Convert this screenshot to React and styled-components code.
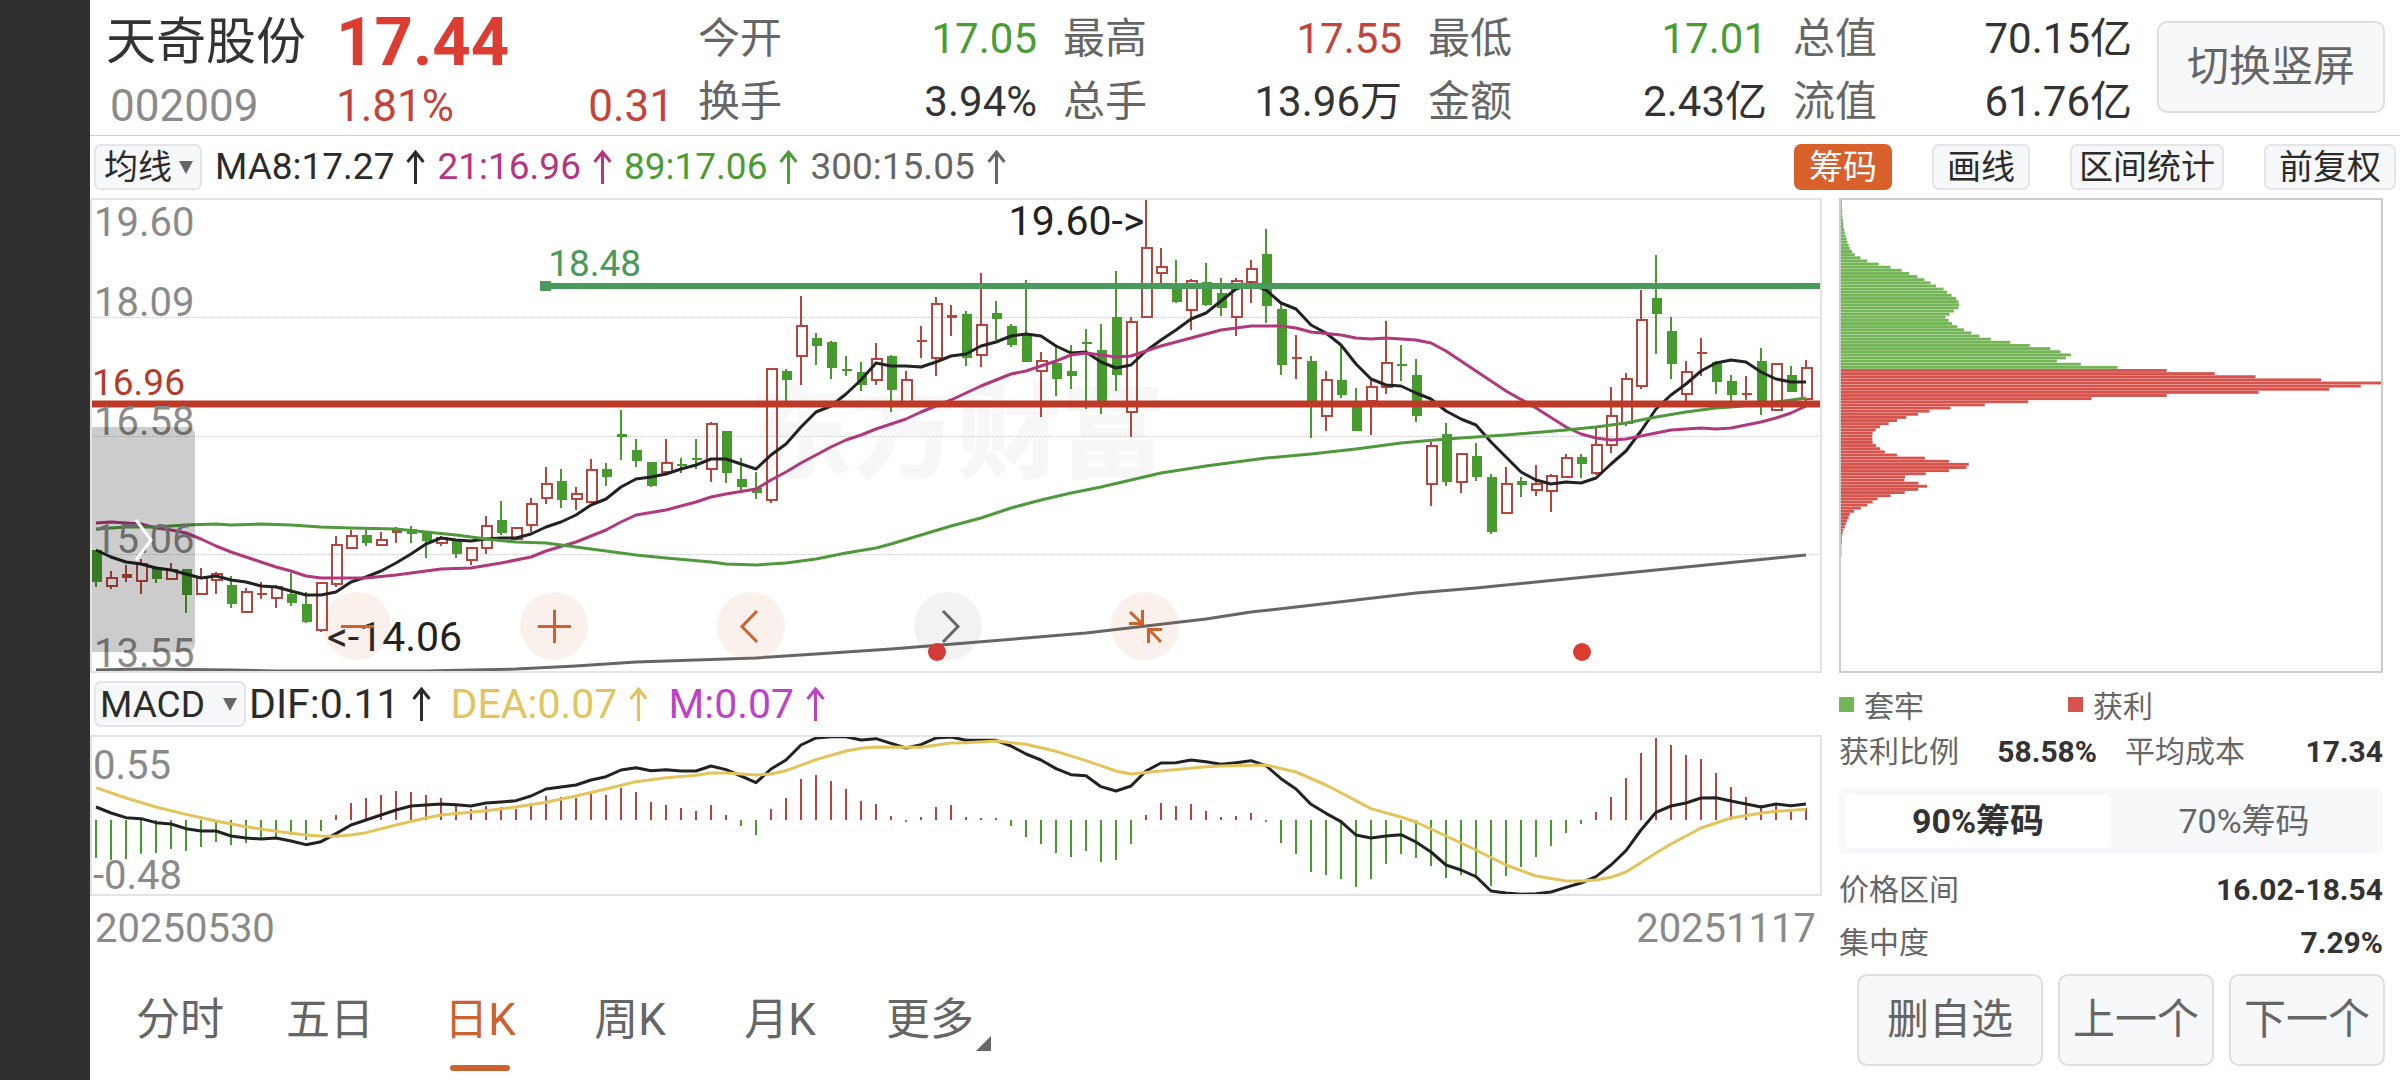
import { useState } from 'react'
import styled, { createGlobalStyle } from 'styled-components'

const RED = '#c4443c'
const GREEN = '#4a9c35'
const ORANGE = '#cc632f'
const INK = '#2b2b2b'
const GREY = '#666'

const GlobalStyle = createGlobalStyle`
  * {
    box-sizing: border-box;
  }
  body {
    margin: 0;
    background: #fff;
    color: ${INK};
    font-family: Roboto, 'Noto Sans CJK SC', sans-serif;
  }
  button,
  select {
    font-family: inherit;
    cursor: pointer;
  }
  svg {
    display: block;
  }
  dl,
  dt,
  dd,
  h1,
  p {
    margin: 0;
    font-weight: 400;
  }
`

const Page = styled.div`
  display: flex;
  min-height: 100vh;
`

const Notch = styled.aside`
  flex: 0 0 90px;
  background: #303030;
`

const Main = styled.main`
  flex: 1;
  min-width: 0;
`

/* header */
const Header = styled.header`
  display: flex;
  height: 136px;
  padding: 0 15px 0 16px;
  border-bottom: 1px solid #d2d2d2;
`

const Identity = styled.div`
  flex: 0 0 568px;
  display: grid;
  grid-template-columns: 230px 1fr auto;
  grid-template-rows: 68px 60px;
  align-items: center;
  padding-top: 8px;
  margin-right: 24px;
  font-size: 44px;
  line-height: 56px;
  color: ${RED};

  h1 {
    font-size: 50px;
    color: #333;
  }
  .price {
    grid-column: span 2;
    font-size: 67px;
    font-weight: 700;
    color: #dc3d33;
  }
  .code {
    padding-left: 4px;
    color: #8a8a8a;
  }
`

const Stats = styled.dl`
  flex: 1;
  display: grid;
  grid-template-columns: repeat(4, 1fr);
  grid-auto-rows: 63px;
  column-gap: 26px;
  padding-top: 7px;
`

const Stat = styled.div`
  display: flex;
  align-items: center;
  justify-content: space-between;
  font-size: 42px;
  line-height: 56px;
  white-space: nowrap;

  dt {
    color: ${GREY};
  }
  dd {
    color: ${({ $color }) => $color || '#333'};
  }
`

const PlainButton = styled.button`
  width: ${({ $width }) => $width}px;
  height: 92px;
  padding: 0;
  border: 2px solid #dcdee1;
  border-radius: 10px;
  background: #f7f8fa;
  color: ${GREY};
  font-size: 42px;
  line-height: 56px;
`

const RotateButton = styled(PlainButton)`
  margin: 21px 0 0 25px;
`

/* toolbars */
const Toolbar = styled.div`
  display: flex;
  align-items: center;
  height: 62px;
  padding: 0 4px;
`

const SelectBox = styled.label`
  position: relative;
  display: block;

  select {
    appearance: none;
    display: block;
    width: ${({ $width }) => $width}px;
    height: 46px;
    padding: 0 0 0 ${({ $inset }) => $inset}px;
    border: 2px solid #e3e5e8;
    border-radius: 7px;
    background: #f7f8fa;
    color: ${INK};
    font-size: ${({ $size }) => $size}px;
  }
  svg {
    position: absolute;
    right: 9px;
    top: 17px;
    pointer-events: none;
  }
`

const Readings = styled.div`
  display: flex;
  flex: 1;
  gap: ${({ $gap }) => $gap}px;
  margin-left: ${({ $lead }) => $lead}px;
  font-size: ${({ $size }) => $size}px;
  line-height: 46px;
`

const Reading = styled.span`
  display: flex;
  align-items: center;
  gap: 12px;
  color: ${({ $color }) => $color};
`

const Tools = styled.div`
  display: flex;
  gap: 40px;
`

const Tool = styled.button`
  height: 46px;
  padding: 0 ${({ $tight }) => ($tight ? 7 : 13)}px;
  border: 2px solid ${({ $on }) => ($on ? '#d8602a' : '#e3e5e8')};
  border-radius: 7px;
  background: ${({ $on }) => ($on ? '#d8602a' : '#f7f8fa')};
  color: ${({ $on }) => ($on ? '#fff' : INK)};
  font-size: 34px;
  line-height: 40px;
`

/* body */
const Body = styled.div`
  display: flex;
  gap: 17px;
  padding-right: 17px;
`

const Charts = styled.section`
  flex: 1;
  min-width: 0;
`

const Plot = styled.div`
  position: relative;
  height: ${({ $height }) => $height}px;
  border: 2px solid #e4e4e4;
  overflow: hidden;

  > svg {
    position: relative;
    width: 100%;
    height: 100%;
  }
`

const Watermark = styled.div`
  position: absolute;
  left: 38%;
  top: 160px;
  font-size: 104px;
  font-weight: 900;
  line-height: 150px;
  color: #f7f7f7;
  white-space: nowrap;
`

const PlotLabel = styled.span`
  position: absolute;
  font-size: ${({ $size }) => $size || 40}px;
  line-height: 34px;
  color: ${({ $color }) => $color || '#8a8a8a'};
  white-space: nowrap;
`

const Drawer = styled.button`
  position: absolute;
  left: 0;
  top: 227px;
  display: flex;
  align-items: center;
  justify-content: center;
  width: 103px;
  height: 225px;
  padding: 0;
  border: 0;
  border-radius: 0 8px 8px 0;
  background: rgba(0, 0, 0, 0.2);
`

const Controls = styled.div`
  position: absolute;
  left: 231px;
  top: 392px;
  display: flex;
  gap: 129px;
`

const Round = styled.button`
  display: flex;
  align-items: center;
  justify-content: center;
  width: 68px;
  height: 68px;
  padding: 0;
  border: 0;
  border-radius: 50%;
  background: ${({ $muted }) => ($muted ? 'rgba(90, 90, 90, 0.08)' : 'rgba(216, 96, 42, 0.09)')};
  color: ${({ $muted }) => ($muted ? '#666' : ORANGE)};
`

const Dates = styled.div`
  display: flex;
  justify-content: space-between;
  align-items: center;
  height: 64px;
  padding: 0 6px 0 5px;
  font-size: 40px;
  color: #8a8a8a;
`

/* chip panel */
const Side = styled.section`
  flex: 0 0 544px;
`

const ChipPlot = styled.div`
  height: 475px;
  border: 2px solid #ccc;

  svg {
    width: 100%;
    height: 100%;
  }
`

const Legend = styled.div`
  display: grid;
  grid-template-columns: 229px 1fr;
  align-items: center;
  height: 62px;
  font-size: 30px;
  color: ${GREY};

  span {
    display: flex;
    align-items: center;
    gap: 10px;
  }
  i {
    width: 15px;
    height: 15px;
  }
`

const Details = styled.div`
  display: flex;
  flex-direction: column;
  gap: 19px;
`

const Facts = styled.dl`
  display: flex;
  gap: 28px;
`

const Fact = styled.div`
  flex: 1;
  display: flex;
  justify-content: space-between;
  font-size: 30px;
  line-height: 34px;

  dt {
    color: ${GREY};
  }
  dd {
    font-weight: 700;
    color: #333;
  }
`

const Segments = styled.div`
  display: flex;
  height: 66px;
  padding: 6px;
  border-radius: 6px;
  background: #f7f8fa;
`

const Segment = styled.button`
  flex: 1;
  padding: 0;
  border: 0;
  border-radius: 6px;
  background: ${({ $on }) => ($on ? '#fff' : 'transparent')};
  color: ${({ $on }) => ($on ? '#333' : GREY)};
  font-size: 34px;
  font-weight: ${({ $on }) => ($on ? 700 : 400)};
  line-height: 50px;
`

/* footer */
const Footer = styled.footer`
  display: flex;
  align-items: center;
  justify-content: space-between;
  height: 120px;
  padding: 0 15px;
`

const Periods = styled.nav`
  display: flex;
`

const Period = styled.button`
  position: relative;
  width: 150px;
  height: 102px;
  padding: 0;
  border: 0;
  background: none;
  color: ${({ $on }) => ($on ? ORANGE : GREY)};
  font-size: 44px;
  line-height: 60px;

  &::after {
    content: '';
    position: absolute;
    left: 45px;
    bottom: 0;
    width: 60px;
    height: 6px;
    border-radius: 3px;
    background: ${({ $on }) => ($on ? ORANGE : 'transparent')};
  }
  svg {
    position: absolute;
    right: 14px;
    bottom: 20px;
  }
`

const Actions = styled.div`
  display: flex;
  gap: 15px;
`

const stats = [
  ['今开', '17.05', GREEN],
  ['最高', '17.55', RED],
  ['最低', '17.01', GREEN],
  ['总值', '70.15亿'],
  ['换手', '3.94%'],
  ['总手', '13.96万'],
  ['金额', '2.43亿'],
  ['流值', '61.76亿'],
]

// kind, high, body top, body bottom, low - three units to a pixel
const candles = `
G1080,1080,1175,1190 R1144,1165,1187,1196 R1125,1153,1165,1175 R1107,1121,1173,1213 G1128,1131,1166,1178
R1119,1140,1166,1166 G1137,1137,1215,1268 R1134,1164,1213,1213 R1146,1153,1171,1211 G1158,1184,1243,1255
R1195,1207,1265,1270 R1176,1208,1211,1227 R1185,1192,1224,1255 G1148,1213,1238,1247 G1206,1241,1296,1299
R1179,1179,1321,1327 R1039,1065,1182,1190 R1020,1039,1073,1073 G1020,1035,1060,1069 R1027,1051,1064,1064
R1010,1016,1030,1060 G1008,1017,1032,1060 G1024,1024,1052,1103 R1037,1045,1059,1069 G1046,1047,1091,1105
R1073,1075,1110,1126 R978,1009,1073,1091 G934,990,1028,1036 R1010,1013,1048,1048 R923,941,1006,1025
R831,881,923,943 G838,873,931,955 R890,911,928,961 R807,839,937,940 G819,837,860,888
G661,733,742,810 G747,780,813,830 G816,816,889,892 R747,818,847,852 G804,822,827,849
G746,803,810,836 R697,701,836,877 G724,724,849,880 G805,868,890,905 G847,893,910,927
R538,538,931,940 G538,544,571,637 R319,409,498,585 G430,444,467,525 G453,455,534,567
G499,538,544,557 G517,546,584,602 R460,506,570,585 G496,499,599,665 R543,570,637,637
R408,451,455,504 R322,341,504,559 R346,374,385,437 G364,373,505,527 R248,405,496,531
G333,370,388,450 G403,409,464,470 G271,435,517,517 R486,512,542,680 G470,520,566,619
G464,544,557,596 G418,456,463,656 G402,481,640,671 G242,380,554,602 R380,395,667,741
R27,173,381,381 R175,232,250,280 G210,280,335,339 R267,274,359,420 G219,277,344,347
G264,309,353,378 R264,273,381,437 R210,237,276,339 G117,192,348,399 G342,356,524,555
R434,502,506,567 G499,514,640,744 R544,570,679,723 G462,570,615,624 G594,645,722,722
R565,592,633,735 R393,519,592,612 G466,523,529,572 G507,555,678,696 R756,769,883,948
G699,732,875,889 R791,791,877,910 G760,798,861,873 G852,861,1025,1032 R831,881,968,968
G861,874,884,922 R826,881,899,919 R853,857,903,967 R791,803,862,865 G791,800,823,864
R714,764,850,855 R591,677,764,789 R549,566,699,708 R300,390,589,597 G196,324,372,492
G381,422,521,567 R514,545,613,637 R444,486,490,558 G514,516,576,612 G556,574,616,637
R558,609,613,629 G474,514,640,675 R520,521,661,661 G528,556,606,606 R510,534,628,640`
  .trim()
  .split(/\s+/)
  .map((item) => ({ up: item[0] === 'R', v: item.slice(1).split(',').map(Number) }))

const ma8 = [
  1080, 1101, 1117, 1121, 1135, 1141, 1151, 1163, 1159, 1169, 1176, 1187, 1190, 1202, 1214, 1216, 1205, 1177, 1160,
  1142, 1119, 1092, 1063, 1045, 1049, 1053, 1048, 1045, 1043, 1033, 1012, 997, 975, 945, 927, 891, 866, 860, 852, 838,
  825, 808, 806, 823, 836, 794, 763, 711, 667, 648, 612, 570, 520, 527, 527, 532, 515, 497, 491, 469, 455, 438, 431,
  439, 467, 489, 485, 515, 535, 526, 483, 450, 419, 386, 370, 333, 296, 282, 300, 338, 358, 404, 430, 465, 521, 566,
  586, 587, 608, 626, 662, 686, 704, 755, 802, 847, 871, 883, 875, 878, 865, 823, 783, 724, 657, 614, 582, 543, 519,
  510, 516, 546, 566, 576, 575,
].map((v, i) => [i, v])

const ma21 = [
  [0, 999], [1, 997], [3, 1003], [4, 1013], [5, 1020], [6, 1030], [7, 1048], [8, 1067], [9, 1087], [10, 1100],
  [11, 1116], [12, 1130], [13, 1144], [14, 1158], [15, 1165], [18, 1163], [20, 1155], [22, 1142], [23, 1137],
  [25, 1133], [27, 1118], [29, 1100], [30, 1083], [32, 1055], [34, 1020], [35, 995], [36, 976], [38, 959], [40, 937],
  [41, 920], [42, 911], [44, 898], [45, 871], [46, 846], [47, 820], [48, 794], [49, 771], [50, 750], [51, 736],
  [52, 716], [53, 701], [54, 688], [55, 667], [56, 648], [57, 629], [58, 609], [59, 588], [60, 569], [61, 553],
  [62, 543], [63, 528], [64, 513], [65, 496], [66, 490], [67, 495], [68, 502], [69, 499], [70, 483], [71, 467],
  [73, 443], [75, 421], [77, 408], [79, 408], [80, 413], [81, 425], [83, 434], [84, 443], [85, 446], [86, 444],
  [88, 450], [89, 460], [90, 483], [92, 544], [94, 604], [96, 655], [98, 710], [99, 733], [100, 745], [101, 751],
  [102, 747], [103, 738], [104, 728], [105, 719], [107, 714], [108, 716], [109, 713], [110, 706], [111, 695],
  [112, 683], [113, 670], [114, 648],
]

const ma89 = [
  [0, 1016], [2, 1012], [4, 1010], [6, 1006], [8, 1003], [9, 1004], [11, 1001], [13, 1005], [15, 1011], [17, 1014],
  [20, 1018], [22, 1025], [24, 1036], [26, 1047], [28, 1055], [30, 1060], [32, 1070], [34, 1082], [36, 1095],
  [38, 1103], [41, 1115], [42, 1121], [44, 1126], [46, 1118], [48, 1106], [50, 1090], [52, 1075], [53, 1062],
  [55, 1035], [57, 1008], [59, 983], [61, 954], [63, 930], [65, 910], [67, 890], [69, 870], [71, 850], [74, 827],
  [76, 815], [78, 803], [81, 791], [84, 778], [87, 759], [90, 746], [92, 740], [94, 734], [98, 720], [100, 710],
  [102, 698], [104, 680], [106, 667], [108, 655], [109, 652], [111, 641], [114, 624],
]

const ma300 = [
  [0, 1440], [3, 1436], [9, 1440], [12, 1444], [22, 1443], [25, 1441], [28, 1437], [32, 1428], [36, 1417], [38, 1413],
  [44, 1405], [48, 1393], [53, 1377], [58, 1360], [62, 1345], [66, 1330], [70, 1307], [74, 1288], [77, 1267],
  [80, 1250], [84, 1230], [88, 1209], [92, 1193], [96, 1175], [100, 1157], [104, 1140], [108, 1122], [112, 1103],
  [114, 1096],
]

const MACD_ZERO = 450
const macdBars = [
  564, 570, 567, 551, 549, 537, 543, 531, 516, 525, 519, 510, 501, 495, 510, 483, 435, 399, 384, 375, 363, 366, 375,
  384, 405, 417, 408, 411, 417, 399, 378, 381, 384, 372, 375, 354, 366, 396, 405, 414, 423, 405, 435, 468, 495, 417,
  384, 327, 315, 333, 357, 393, 402, 438, 456, 441, 411, 405, 441, 444, 444, 468, 501, 522, 549, 561, 543, 576, 570,
  522, 435, 399, 408, 402, 423, 441, 438, 429, 456, 519, 552, 606, 615, 627, 651, 627, 582, 552, 564, 588, 624, 615,
  615, 648, 618, 591, 561, 528, 489, 462, 426, 381, 324, 249, 204, 225, 255, 267, 309, 351, 381, 405, 402, 423, 414,
]

const dif = [
  411, 429, 443, 446, 458, 462, 476, 483, 483, 498, 504, 507, 504, 513, 524, 515, 491, 465, 450, 435, 420, 408, 405,
  402, 404, 408, 399, 396, 392, 378, 357, 351, 345, 330, 320, 300, 293, 302, 299, 303, 303, 288, 299, 318, 338, 297,
  270, 225, 204, 200, 200, 210, 206, 220, 234, 224, 204, 201, 211, 211, 211, 228, 252, 270, 296, 314, 317, 350, 363,
  348, 303, 279, 278, 270, 275, 283, 278, 272, 287, 326, 357, 403, 430, 455, 495, 504, 498, 494, 516, 546, 585, 600,
  620, 663, 669, 673, 671, 666, 652, 639, 620, 585, 542, 480, 427, 408, 399, 384, 383, 393, 402, 411, 402, 407, 402,
].map((v, i) => [i, v])

const dea = [
  [0, 353], [2, 384], [4, 411], [6, 433], [8, 453], [10, 470], [12, 484], [14, 495], [15, 498], [16, 499], [17, 495],
  [18, 488], [20, 465], [22, 444], [23, 435], [26, 422], [28, 411], [30, 397], [32, 378], [34, 357], [36, 335],
  [38, 323], [40, 316], [41, 309], [42, 309], [44, 315], [45, 312], [46, 302], [48, 269], [50, 243], [51, 235],
  [52, 231], [55, 232], [57, 219], [58, 218], [60, 213], [62, 223], [64, 244], [66, 272], [68, 303], [69, 312],
  [71, 303], [74, 290], [75, 288], [78, 285], [80, 306], [82, 345], [84, 392], [85, 416], [87, 441], [88, 456],
  [90, 498], [92, 540], [94, 585], [96, 618], [98, 633], [99, 633], [100, 630], [101, 622], [102, 606], [104, 549],
  [105, 522], [107, 474], [109, 444], [111, 430], [112, 424], [114, 418],
]

const chipsAbove = [
  2, 2, 2, 3, 3, 4, 5, 6, 6, 8, 10, 12, 15, 17, 20, 23, 29, 36, 51, 69, 99, 130, 159, 179, 200, 219, 235, 249, 269,
  278, 290, 302, 308, 310, 308, 296, 285, 274, 282, 291, 305, 323, 342, 363, 393, 444, 495, 549, 576, 603, 590, 566,
  629, 725,
]
const chipsBelow = [
  854, 980, 1087, 1259, 1416, 1363, 1280, 1095, 854, 657, 491, 377, 287, 232, 202, 171, 147, 125, 102, 91, 83, 82, 82,
  83, 92, 103, 115, 147, 220, 283, 335, 329, 283, 222, 168, 166, 203, 226, 202, 167, 130, 96, 83, 69, 52, 34, 23, 20,
  16, 13, 10, 6, 4, 2, 2, 2, 1, 1, 1, 1,
]
const CHIP_STEP = 3.13

const xAt = (i) => 6 + i * 15
const priceY = (v) => Math.round(v / 3) - 8
const macdY = (v) => v / 3 - 65
const toPoints = (list, y) => list.map(([i, v]) => `${xAt(i)},${y(v)}`).join(' ')

function Candle({ index, up, v }) {
  const x = xAt(index)
  const [high, top, bottom, low] = v.map(priceY)
  const color = up ? '#b5453d' : '#479a2e'
  const height = bottom - top

  if (!up || height < 5) {
    return (
      <g fill={color}>
        <rect x={x - 1} y={high} width="2" height={low - high} />
        <rect x={x - 4} y={top} width="10" height={Math.max(height, 2)} />
      </g>
    )
  }
  return (
    <g fill={color}>
      <rect x={x - 1} y={high} width="2" height={Math.max(top - high, 0)} />
      <rect x={x - 1} y={bottom} width="2" height={Math.max(low - bottom, 0)} />
      <rect x={x - 4} y={top} width="10" height={height} fill="none" stroke={color} strokeWidth="2" />
    </g>
  )
}

function PricePlot() {
  return (
    <Plot $height={475}>
      <Watermark>东方财富</Watermark>
      <svg viewBox="2 2 1728 471" preserveAspectRatio="none" fill="none" role="img" aria-label="日K线图">
        {[119, 238, 356].map((y) => (
          <line key={y} x1="2" x2="1730" y1={y + 0.5} y2={y + 0.5} stroke="#c8c8c8" strokeDasharray="1 1" />
        ))}
        {candles.map((c, i) => (
          <Candle key={i} index={i} up={c.up} v={c.v} />
        ))}
        <g strokeWidth="3" strokeLinejoin="round">
          <polyline points={toPoints(ma300, priceY)} stroke="#666" />
          <polyline points={toPoints(ma8, priceY)} stroke="#222" />
          <polyline points={toPoints(ma21, priceY)} stroke="#b0387c" />
          <polyline points={toPoints(ma89, priceY)} stroke="#4f983b" />
        </g>
        <rect x="450" y="83" width="11" height="10" fill="#4a9a5c" />
        <line x1="455" x2="1732" y1="88" y2="88" stroke="#4a9a5c" strokeWidth="6" />
        <line x1="0" x2="1732" y1="206" y2="206" stroke="#bd3a29" strokeWidth="7" />
        <circle cx="847" cy="454" r="9" fill="#dc3b33" />
        <circle cx="1492" cy="454" r="9" fill="#dc3b33" />
      </svg>
      {['19.60', '18.09', '16.58', '15.06', '13.55'].map((label, i) => (
        <PlotLabel key={label} style={{ left: 2, top: [6, 86, 205, 323, 437][i] }}>
          {label}
        </PlotLabel>
      ))}
      <PlotLabel $size={37} $color="#b83a2b" style={{ left: 0, top: 166 }}>
        16.96
      </PlotLabel>
      <PlotLabel $size={37} $color="#4a9a5c" style={{ left: '26.4%', top: 47 }}>
        18.48
      </PlotLabel>
      <PlotLabel $size={41} $color="#222" style={{ right: '39.1%', top: 4 }}>
        19.60-&gt;
      </PlotLabel>
      <PlotLabel $size={41} $color="#222" style={{ left: '13.6%', top: 420 }}>
        &lt;-14.06
      </PlotLabel>
      <Drawer aria-label="展开">
        <svg width="18" height="42" viewBox="0 0 18 42" fill="none" stroke="#fff" strokeWidth="3">
          <path d="M1 1 16 21 1 41" />
        </svg>
      </Drawer>
      <Controls>
        <Round aria-label="缩小">
          <Glyph d="M1 17.5H34" />
        </Round>
        <Round aria-label="放大">
          <Glyph d="M1 17.5H34M17.5 1V34" />
        </Round>
        <Round aria-label="向左">
          <Glyph d="M23 2 8 17.5 23 33" />
        </Round>
        <Round $muted aria-label="向右">
          <Glyph d="M12 2 27 17.5 12 33" />
        </Round>
        <Round aria-label="收起">
          <Glyph d="M2 3 14 14.5M1 14.5H14.5V1M33 33 21 20.5M34 20.5H20.5V34" />
        </Round>
      </Controls>
    </Plot>
  )
}

function MacdPlot() {
  return (
    <Plot $height={161}>
      <svg viewBox="2 2 1728 157" preserveAspectRatio="none" fill="none" role="img" aria-label="MACD">
        {macdBars.map((v, i) => (
          <line
            key={i}
            x1={xAt(i)}
            x2={xAt(i)}
            y1={macdY(MACD_ZERO)}
            y2={macdY(v)}
            stroke={v < MACD_ZERO ? '#b5453d' : '#479a2e'}
            strokeWidth="2"
          />
        ))}
        <g strokeWidth="3" strokeLinejoin="round">
          <polyline points={toPoints(dif, macdY)} stroke="#222" />
          <polyline points={toPoints(dea, macdY)} stroke="#e3c45c" />
        </g>
      </svg>
      <PlotLabel style={{ left: 1, top: 12 }}>0.55</PlotLabel>
      <PlotLabel style={{ left: 1, bottom: 1 }}>-0.48</PlotLabel>
    </Plot>
  )
}

function ChipChart() {
  return (
    <ChipPlot>
      <svg viewBox="0 0 1416 471" preserveAspectRatio="none" role="img" aria-label="筹码分布">
        {[...chipsAbove, ...chipsBelow].map((w, i) => (
          <rect
            key={i}
            x="0"
            y={i * CHIP_STEP}
            width={w}
            height="2.9"
            fill={i < chipsAbove.length ? '#74b657' : '#d6544e'}
          />
        ))}
      </svg>
    </ChipPlot>
  )
}

const Glyph = ({ d }) => (
  <svg width="35" height="35" viewBox="0 0 35 35" fill="none" stroke="currentColor" strokeWidth="3">
    <path d={d} />
  </svg>
)

const Up = () => (
  <svg width="19" height="34" viewBox="0 0 19 34" fill="none" stroke="currentColor" strokeWidth="3">
    <path d="M9.5 34V2M1.5 12 9.5 2 17.5 12" />
  </svg>
)

const Caret = () => (
  <svg width="14" height="13" viewBox="0 0 14 13">
    <path d="M0 0H14L7 13Z" fill="#666" />
  </svg>
)

function App() {
  const [range, setRange] = useState('90%筹码')
  const [period, setPeriod] = useState('日K')

  return (
    <Page>
      <GlobalStyle />
      <Notch />
      <Main>
        <Header>
          <Identity>
            <h1>天奇股份</h1>
            <span className="price">17.44</span>
            <span className="code">002009</span>
            <span>1.81%</span>
            <span>0.31</span>
          </Identity>
          <Stats>
            {stats.map(([name, value, color]) => (
              <Stat key={name} $color={color}>
                <dt>{name}</dt>
                <dd>{value}</dd>
              </Stat>
            ))}
          </Stats>
          <RotateButton $width={228}>切换竖屏</RotateButton>
        </Header>

        <Toolbar>
          <SelectBox $width={108} $inset={8} $size={34}>
            <select aria-label="主图指标">
              <option>均线</option>
            </select>
            <Caret />
          </SelectBox>
          <Readings $size={37} $gap={12} $lead={13}>
            <Reading $color={INK}>MA8:17.27<Up /></Reading>
            <Reading $color="#b5367f">21:16.96<Up /></Reading>
            <Reading $color={GREEN}>89:17.06<Up /></Reading>
            <Reading $color={GREY}>300:15.05<Up /></Reading>
          </Readings>
          <Tools>
            <Tool $on>筹码</Tool>
            <Tool>画线</Tool>
            <Tool $tight>区间统计</Tool>
            <Tool>前复权</Tool>
          </Tools>
        </Toolbar>

        <Body>
          <Charts>
            <PricePlot />
            <Toolbar>
              <SelectBox $width={152} $inset={4} $size={37}>
                <select aria-label="副图指标">
                  <option>MACD</option>
                </select>
                <Caret />
              </SelectBox>
              <Readings $size={41} $gap={20} $lead={3}>
                <Reading $color={INK}>DIF:0.11<Up /></Reading>
                <Reading $color="#e3c45c">DEA:0.07<Up /></Reading>
                <Reading $color="#be42c8">M:0.07<Up /></Reading>
              </Readings>
            </Toolbar>
            <MacdPlot />
            <Dates>
              <time>20250530</time>
              <time>20251117</time>
            </Dates>
          </Charts>

          <Side>
            <ChipChart />
            <Legend>
              <span><i style={{ background: '#74b657' }} />套牢</span>
              <span><i style={{ background: '#d6544e' }} />获利</span>
            </Legend>
            <Details>
              <Facts>
                <Fact><dt>获利比例</dt><dd>58.58%</dd></Fact>
                <Fact><dt>平均成本</dt><dd>17.34</dd></Fact>
              </Facts>
              <Segments>
                {['90%筹码', '70%筹码'].map((name) => (
                  <Segment key={name} $on={range === name} onClick={() => setRange(name)}>
                    {name}
                  </Segment>
                ))}
              </Segments>
              <Facts>
                <Fact><dt>价格区间</dt><dd>16.02-18.54</dd></Fact>
              </Facts>
              <Facts>
                <Fact><dt>集中度</dt><dd>7.29%</dd></Fact>
              </Facts>
            </Details>
          </Side>
        </Body>

        <Footer>
          <Periods>
            {['分时', '五日', '日K', '周K', '月K', '更多'].map((name) => (
              <Period key={name} $on={period === name} onClick={() => setPeriod(name)}>
                {name}
                {name === '更多' && (
                  <svg width="15" height="15" viewBox="0 0 15 15">
                    <path d="M15 0V15H0Z" fill="#666" />
                  </svg>
                )}
              </Period>
            ))}
          </Periods>
          <Actions>
            <PlainButton $width={186}>删自选</PlainButton>
            <PlainButton $width={156}>上一个</PlainButton>
            <PlainButton $width={156}>下一个</PlainButton>
          </Actions>
        </Footer>
      </Main>
    </Page>
  )
}

export default App
